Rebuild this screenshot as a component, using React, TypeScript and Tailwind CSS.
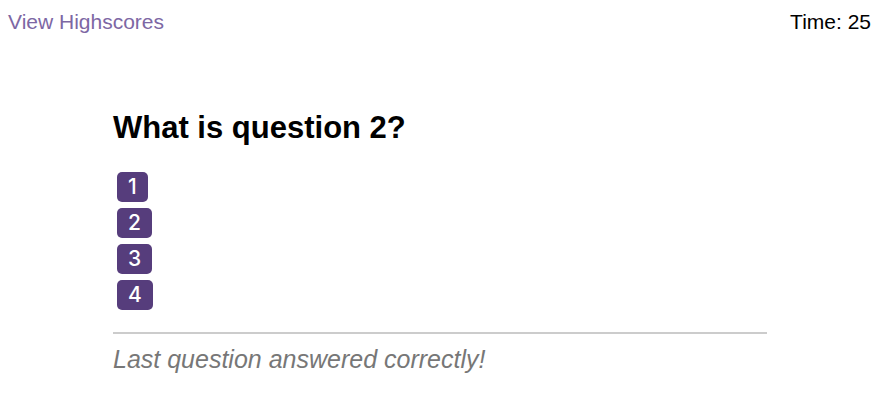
const answers = ["1", "2", "3", "4"];

export default function App() {
  return (
    <div className="min-h-[419px] bg-white font-['Liberation_Sans',Arial,sans-serif]">
      <header className="flex items-center justify-between px-2 pt-[10px] text-[21px] leading-6">
        <a className="text-[#7d67a4]">View Highscores</a>
        <span className="pr-px text-black">Time: 25</span>
      </header>

      <main className="mx-auto mt-[75px] w-[654px]">
        <h1 className="text-[31px] font-bold leading-[37px] text-black">
          What is question 2?
        </h1>

        <ul className="mt-[26px] flex flex-col items-start gap-[6px] pl-[4px]">
          {answers.map((a) => (
            <li key={a}>
              <button className="flex h-[30px] items-center rounded-[5px] bg-[#563d7c] px-[11px] font-['Inter',sans-serif] text-[21px] font-medium text-white">
                {a}
              </button>
            </li>
          ))}
        </ul>

        <hr className="mt-[22px] border-t-2 border-[#cccccc]" />
        <p className="mt-[11px] text-[25px] italic leading-[29px] text-[#777777]">
          Last question answered correctly!
        </p>
      </main>
    </div>
  );
}
